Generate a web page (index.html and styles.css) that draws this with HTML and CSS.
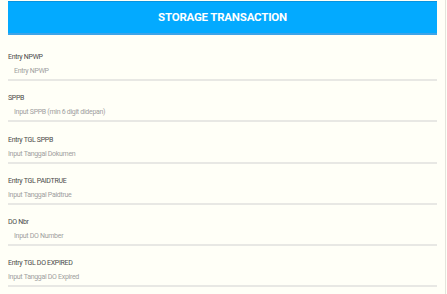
FILE: index.html
```html
<!DOCTYPE html>
<html lang="id">
<head>
    <meta charset="UTF-8">
    <meta name="viewport" content="width=device-width, initial-scale=1.0">
    <title>Storage Transaction</title>
    <link rel="stylesheet" href="styles.css">
</head>
<body>
    <div class="page">
        <div class="header">STORAGE TRANSACTION</div>
        <form class="form">
            <div class="field">
                <label for="npwp">Entry NPWP</label>
                <input type="text" id="npwp" placeholder="Entry NPWP">
            </div>
            <div class="field">
                <label for="sppb">SPPB</label>
                <input type="text" id="sppb" placeholder="Input SPPB (min 6 digit didepan)">
            </div>
            <div class="field">
                <label for="tglSppb">Entry TGL SPPB</label>
                <input type="text" class="date" id="tglSppb" placeholder="Input Tanggal Dokumen">
            </div>
            <div class="field">
                <label for="tglPaid">Entry TGL PAIDTRUE</label>
                <input type="text" class="date" id="tglPaid" placeholder="Input Tanggal Paidtrue">
            </div>
            <div class="field">
                <label for="doNbr">DO Nbr</label>
                <input type="text" id="doNbr" placeholder="Input DO Number">
            </div>
            <div class="field">
                <label for="tglDo">Entry TGL DO EXPIRED</label>
                <input type="text" class="date" id="tglDo" placeholder="Input Tanggal DO Expired">
            </div>
        </form>
    </div>
</body>
</html>
```

FILE: styles.css
```css
html {
    background-color: #fffff7;
}
body {
    font-family: Roboto, Arial, sans-serif;
    margin: 0;
    padding: 1px 8px 0 8px;
    background-color: #fffff7;
    border-right: 1px solid #e4e4dc;
    width: 429px;
    height: 293px;
    overflow: hidden;
}
.header {
    background-color: #03aaff;
    border-top: 1px solid #0894e0;
    border-bottom: 2px solid #3ea4e8;
    color: white;
    font-weight: bold;
    font-size: 11.5px;
    letter-spacing: -0.2px;
    text-align: center;
    height: 31px;
    line-height: 31px;
}
.form {
    padding-top: 16px;
}
.field {
    display: flex;
    flex-direction: column;
    height: 41.3px;
}
.field label {
    font-size: 7px;
    letter-spacing: -0.3px;
    color: #4a4a4a;
    height: 12px;
    line-height: 12px;
}
.field input {
    font-family: inherit;
    font-size: 7px;
    letter-spacing: -0.3px;
    color: #333;
    background: transparent;
    border: none;
    border-bottom: 2px solid #e8e8e4;
    padding: 0 6px;
    height: 16px;
    outline: none;
}
.field input.date {
    padding: 0;
}
.field input::placeholder {
    color: #a0a0a0;
}
```
